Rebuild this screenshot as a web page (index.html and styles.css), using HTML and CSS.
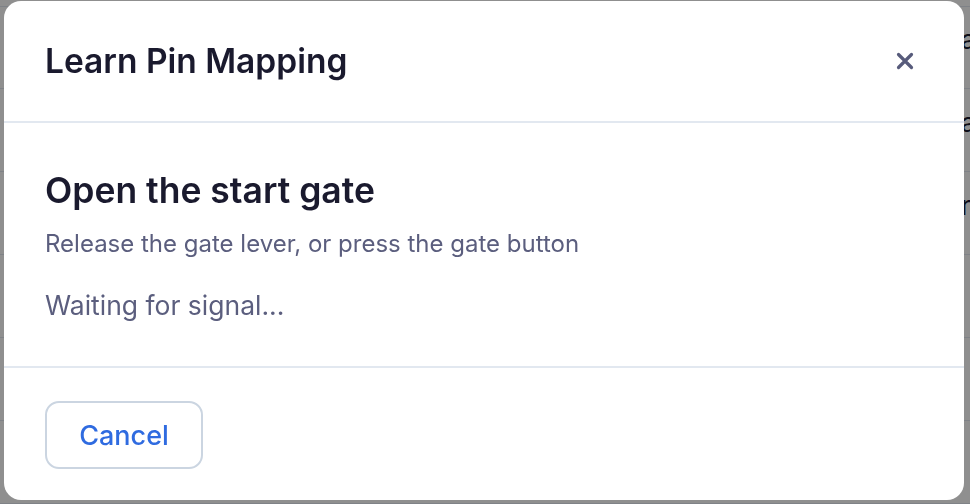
FILE: index.html
```html
<!DOCTYPE html>
<html>
<head>
<meta charset="utf-8">
<link rel="stylesheet" href="styles.css">
</head>
<body>
<div class="page">
  <div class="table">
    <div class="row"><span class="cell-end">a</span></div>
    <div class="row"><span class="cell-end">a</span></div>
    <div class="row"><span class="cell-end">r</span></div>
    <div class="row"><span class="cell-end"></span></div>
    <div class="row"><span class="cell-end"></span></div>
    <div class="row"><span class="cell-end"></span></div>
    <div class="head-row"><span class="h1">BADGES</span><span class="h2">VS AVG</span></div>
  </div>
</div>
<div class="overlay">
  <div class="modal">
    <div class="modal-header">
      <h2 class="modal-title">Learn Pin Mapping</h2>
      <button class="close" aria-label="Close">
        <svg width="18" height="18" viewBox="0 0 18 18"><path d="M2.5 2.5L15.5 15.5M15.5 2.5L2.5 15.5" stroke="#575b7b" stroke-width="3.2" stroke-linecap="round"/></svg>
      </button>
    </div>
    <div class="modal-body">
      <h3 class="step-title">Open the start gate</h3>
      <p class="step-desc">Release the gate lever, or press the gate button</p>
      <p class="status">Waiting for signal...</p>
    </div>
    <div class="modal-footer">
      <button class="btn-cancel">Cancel</button>
    </div>
  </div>
</div>
</body>
</html>
```
FILE: styles.css
```css
html, body {
  margin: 0;
  padding: 0;
  height: 100%;
  overflow: hidden;
}
body {
  background: #ffffff;
  font-family: Inter, "Noto Sans", sans-serif;
}
.page {
  padding-top: 6px;
}
.table {
  display: flex;
  flex-direction: column;
}
.row {
  height: 82px;
  border-top: 1px solid #e2e8f0;
  display: flex;
  justify-content: flex-end;
  align-items: center;
  font-size: 26px;
  color: #1a1a2e;
  overflow: hidden;
}
.row:first-child { height: 81px; }
.cell-end {
  display: block;
  width: 9px;
  overflow: hidden;
  transform: translateY(-8px);
}
.head-row {
  border-top: 1px solid #e2e8f0;
  height: 40px;
  display: flex;
  padding-top: 1px;
  font-size: 24px;
  font-weight: 700;
  color: #1a1a2e;
}
.h1 { margin-left: 10px; }
.h2 { margin-left: 80px; }

.overlay {
  position: fixed;
  inset: 0;
  background: rgba(0, 0, 0, 0.44);
  display: flex;
  align-items: flex-start;
  padding: 1px 0 0 4px;
}
.modal {
  width: 960px;
  height: 499px;
  background: #ffffff;
  border-radius: 17px;
  display: flex;
  flex-direction: column;
  overflow: hidden;
}
.modal-header {
  height: 120px;
  flex: none;
  display: flex;
  align-items: center;
  justify-content: space-between;
  padding: 0 50px 0 41px;
  border-bottom: 2px solid #e2e8f0;
}
.modal-title {
  margin: 0;
  font-size: 33.5px;
  font-weight: 600;
  color: #1a1a2e;
  line-height: 40px;
  padding-bottom: 1px;
}
.close {
  border: 0;
  background: none;
  padding: 0;
  width: 18px;
  height: 18px;
  display: flex;
  align-items: center;
  justify-content: center;
  cursor: pointer;
}
.modal-body {
  height: 245px;
  flex: none;
  padding: 46px 41px 0;
  box-sizing: border-box;
  border-bottom: 2px solid #e2e8f0;
}
.step-title {
  margin: 0;
  font-size: 35.5px;
  font-weight: 600;
  color: #1a1a2e;
  line-height: 44px;
}
.step-desc {
  margin: 16px 0 0;
  font-size: 24px;
  color: #5b5e7e;
  line-height: 30px;
}
.status {
  margin: 29px 0 0;
  font-size: 26.5px;
  color: #5b5e7e;
  line-height: 34px;
}
.modal-footer {
  flex: 1;
  padding: 33px 41px 0;
}
.btn-cancel {
  width: 158px;
  height: 68px;
  border: 2px solid #cbd5e1;
  border-radius: 14px;
  background: #ffffff;
  font-family: Inter, "Noto Sans", sans-serif;
  font-size: 27px;
  font-weight: 500;
  color: #2f6be0;
  cursor: pointer;
}
```
